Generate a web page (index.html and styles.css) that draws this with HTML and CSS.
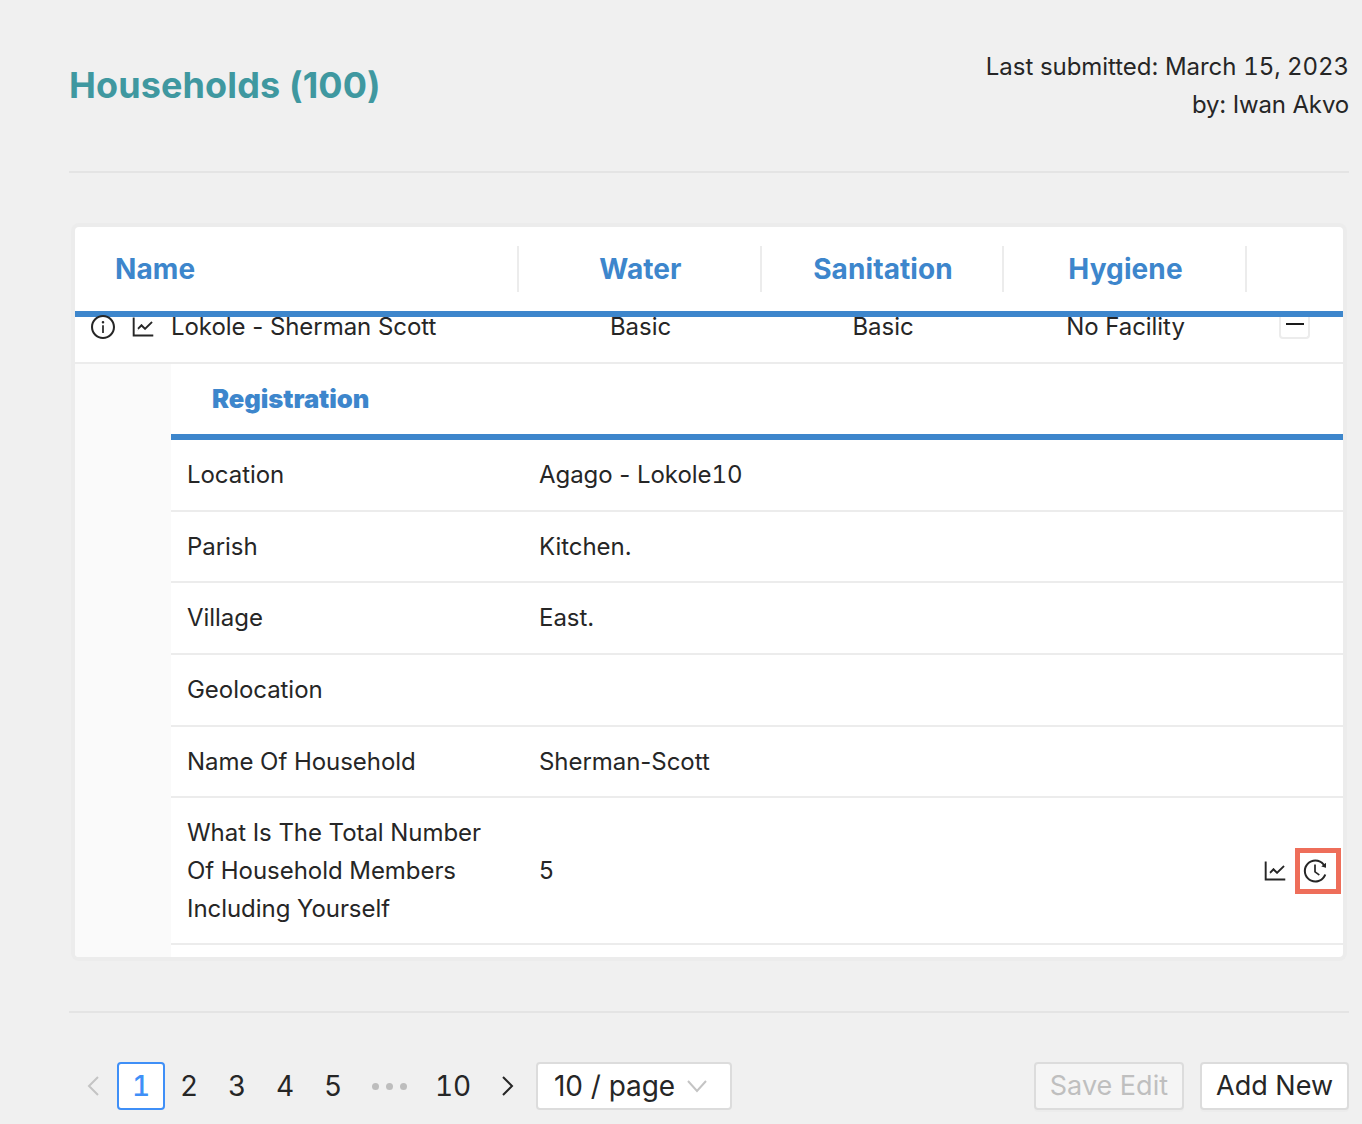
FILE: index.html
```html
<!DOCTYPE html>
<html lang="en">
  <head>
    <meta charset="UTF-8" />
    <title>Households</title>
    <link rel="stylesheet" href="styles.css">
  </head>
  <body>
    <div class="page">
      <header class="page-head">
        <h1>Households (100)</h1>
        <div class="submitted">
          <div>Last submitted: March <span class="num">15, 2023</span></div>
          <div class="submitted-by">by: Iwan Akvo</div>
        </div>
      </header>

      <div class="card">
        <div class="table-head">
          <div class="th th-name">Name</div>
          <div class="th">Water</div>
          <div class="th">Sanitation</div>
          <div class="th">Hygiene</div>
          <div class="th th-end"></div>
        </div>

        <div class="table-row">
          <div class="cell-name">
            <svg class="icon" viewBox="64 64 896 896"><path d="M512 64C264.6 64 64 264.6 64 512s200.6 448 448 448 448-200.6 448-448S759.4 64 512 64zm0 820c-205.4 0-372-166.6-372-372s166.6-372 372-372 372 166.6 372 372-166.6 372-372 372z"/><path d="M464 336a48 48 0 1 0 96 0 48 48 0 1 0-96 0zm72 112h-48c-4.4 0-8 3.6-8 8v272c0 4.4 3.6 8 8 8h48c4.4 0 8-3.6 8-8V456c0-4.4-3.6-8-8-8z"/></svg>
            <svg class="icon icon-chart" viewBox="64 64 896 896"><path d="M888 792H200V168c0-4.4-3.6-8-8-8h-56c-4.4 0-8 3.6-8 8v688c0 4.4 3.6 8 8 8h752c4.4 0 8-3.6 8-8v-56c0-4.4-3.6-8-8-8zM305.8 637.7c3.1 3.1 8.1 3.1 11.3 0l138.3-137.6L583 628.5c3.1 3.1 8.2 3.1 11.3 0l275.4-275.3c3.1-3.1 3.1-8.2 0-11.3l-39.6-39.6a8.03 8.03 0 0 0-11.3 0l-230 229.9L461.4 404a8.03 8.03 0 0 0-11.3 0L306 548.9a8.03 8.03 0 0 0-.2 11.3l39.6 39.5z"/></svg>
            <span class="row-title">Lokole - Sherman Scott</span>
          </div>
          <div class="cell">Basic</div>
          <div class="cell">Basic</div>
          <div class="cell">No Facility</div>
          <div class="cell-toggle"><div class="collapse-btn"><span class="minus"></span></div></div>
        </div>

        <div class="detail">
          <div class="detail-indent"></div>
          <div class="detail-body">
            <div class="tab-head">Registration</div>
            <div class="q-row"><div class="q-label">Location</div><div class="q-value">Agago - Lokole<span class="num">10</span></div></div>
            <div class="q-row"><div class="q-label">Parish</div><div class="q-value">Kitchen.</div></div>
            <div class="q-row"><div class="q-label">Village</div><div class="q-value">East.</div></div>
            <div class="q-row"><div class="q-label">Geolocation</div><div class="q-value"></div></div>
            <div class="q-row"><div class="q-label">Name Of Household</div><div class="q-value">Sherman-Scott</div></div>
            <div class="q-row q-row-last">
              <div class="q-label">What Is The Total Number Of Household Members Including Yourself</div>
              <div class="q-value">5</div>
              <div class="q-actions">
                <svg class="icon icon-chart" viewBox="64 64 896 896"><path d="M888 792H200V168c0-4.4-3.6-8-8-8h-56c-4.4 0-8 3.6-8 8v688c0 4.4 3.6 8 8 8h752c4.4 0 8-3.6 8-8v-56c0-4.4-3.6-8-8-8zM305.8 637.7c3.1 3.1 8.1 3.1 11.3 0l138.3-137.6L583 628.5c3.1 3.1 8.2 3.1 11.3 0l275.4-275.3c3.1-3.1 3.1-8.2 0-11.3l-39.6-39.6a8.03 8.03 0 0 0-11.3 0l-230 229.9L461.4 404a8.03 8.03 0 0 0-11.3 0L306 548.9a8.03 8.03 0 0 0-.2 11.3l39.6 39.5z"/></svg>
                <span class="history">
                  <svg class="icon" viewBox="64 64 896 896"><path d="M536.1 273H488c-4.4 0-8 3.6-8 8v275.3c0 2.6 1.2 5 3.3 6.5l165.3 120.7c3.6 2.6 8.6 1.9 11.2-1.7l28.6-39c2.7-3.7 1.9-8.7-1.7-11.2L544.1 528.5V281c0-4.4-3.6-8-8-8zm219.8 75.2l156.8 38.3c5 1.2 9.9-2.6 9.9-7.7l.8-161.5c0-6.7-7.7-10.5-12.9-6.3L752.9 334.1a8 8 0 0 0 3 14.1zm167.7 301.1l-56.7-19.5a8 8 0 0 0-10.1 4.8c-1.9 5.1-3.9 10.1-6 15.1-17.8 42.1-43.3 80-75.9 112.5a353 353 0 0 1-112.5 75.9 352.18 352.18 0 0 1-137.7 27.8c-47.8 0-94.1-9.3-137.7-27.8a353 353 0 0 1-112.5-75.9c-32.5-32.5-58-70.4-75.9-112.5A353.44 353.44 0 0 1 171 512c0-47.8 9.3-94.2 27.8-137.8 17.8-42.1 43.3-80 75.9-112.5a353 353 0 0 1 112.5-75.9C430.6 167.3 477 158 524.8 158s94.1 9.3 137.7 27.8A353 353 0 0 1 775 261.7c10.2 10.3 19.8 21 28.6 32.3l59.8-46.8C784.7 146.6 662.2 81.9 524.6 82 285 82.1 92.6 276.7 95 516.4 97.4 751.9 288.9 942 524.8 942c185.5 0 343.5-117.6 403.7-282.3 1.5-4.2-.7-8.9-4.9-10.4z"/></svg>
                </span>
              </div>
            </div>
          </div>
        </div>
      </div>

      <footer class="page-foot">
        <div class="pager">
          <span class="pg-arrow pg-disabled"><svg viewBox="0 0 14 24"><path d="M12 3 3 12l9 9"/></svg></span>
          <span class="pg-item pg-active">1</span>
          <span class="pg-item">2</span>
          <span class="pg-item">3</span>
          <span class="pg-item">4</span>
          <span class="pg-item">5</span>
          <span class="pg-item pg-dots"><i></i><i></i><i></i></span>
          <span class="pg-item pg-last">10</span>
          <span class="pg-arrow pg-next"><svg viewBox="0 0 14 24"><path d="m2 3 9 9-9 9"/></svg></span>
          <span class="pg-select">10 / page<svg viewBox="0 0 22 14"><path d="m2 2 9 10 9-10"/></svg></span>
        </div>
        <div class="foot-actions">
          <button class="btn" disabled>Save Edit</button>
          <button class="btn">Add New</button>
        </div>
      </footer>
    </div>
  </body>
</html>
```

FILE: styles.css
```css
* {
  box-sizing: border-box;
}
body {
  margin: 0;
  background: #f0f0f0;
  font-family: Inter, 'Liberation Sans', sans-serif;
  font-size: 24px;
  line-height: 38px;
  color: #262626;
  letter-spacing: -0.05px;
}
.num {
  font-variant-numeric: tabular-nums;
}
.page {
  padding: 48px 13px 0 69px;
  min-height: 1124px;
}
.page-head {
  display: flex;
  justify-content: space-between;
  height: 125px;
  border-bottom: 2px solid #e4e4e4;
}
h1 {
  margin: 0;
  font-size: 36px;
  line-height: 74px;
  font-weight: 700;
  letter-spacing: 0.12px;
  color: #3f98a0;
}
.submitted {
  text-align: right;
}
.submitted-by {
  letter-spacing: -0.15px;
}

.card {
  margin: 54px 6px 0;
  height: 730px;
  background: #fff;
  border-radius: 4px;
  box-shadow: 0 0 0 4px #ececec;
  overflow: hidden;
}
.table-head,
.table-row {
  display: grid;
  grid-template-columns: 444px 243px 242px 243px 96px;
}
.table-head {
  height: 90px;
  align-items: center;
  border-bottom: 6px solid #3d86cc;
}
.th {
  height: 46px;
  padding-left: 2px;
  line-height: 46px;
  font-size: 28px;
  font-weight: 700;
  letter-spacing: 0.1px;
  color: #3d86cc;
  text-align: center;
  border-right: 2px solid #ececec;
}
.th-name {
  text-align: left;
  padding-left: 40px;
}
.th-end {
  border-right: none;
}
.table-row {
  height: 47px;
  border-bottom: 2px solid #ececec;
}
.cell-name {
  display: flex;
  align-items: center;
  height: 20px;
  padding-left: 16px;
}
.cell {
  text-align: center;
  height: 20px;
  line-height: 20px;
}
.row-title {
  line-height: 20px;
  margin-left: 16px;
}
.icon {
  width: 24px;
  height: 24px;
  fill: #262626;
  flex: none;
}
.icon-chart {
  margin-left: 16px;
}
.cell-toggle {
  padding-left: 32px;
}
.collapse-btn {
  width: 31px;
  height: 22px;
  padding-top: 6px;
  background: #fff;
  border: 2px solid #ececec;
  border-top: none;
  border-radius: 0 0 4px 4px;
}
.minus {
  display: block;
  width: 18px;
  height: 2px;
  margin: 0 auto;
  background: #1a1a1a;
}

.detail {
  display: flex;
  height: 593px;
}
.detail-indent {
  width: 96px;
  background: #fafafa;
}
.detail-body {
  flex: 1;
}
.tab-head {
  height: 76px;
  padding: 16px 0 0 41px;
  font-size: 25.6px;
  font-weight: 900;
  color: #3d86cc;
  border-bottom: 6px solid #3d86cc;
}
.q-row {
  display: flex;
  align-items: center;
  min-height: 71.7px;
  border-bottom: 2px solid #ececec;
}
.q-label {
  width: 352px;
  padding: 0 16px;
}
.q-value {
  padding-left: 16px;
}
.q-row-last {
  min-height: 147px;
}
.q-actions {
  margin-left: auto;
  display: flex;
  align-items: center;
  padding-right: 2px;
}
.q-actions .icon-chart {
  margin: 0;
}
.history {
  display: flex;
  align-items: center;
  justify-content: center;
  width: 46px;
  height: 46px;
  margin-left: 8px;
  padding-right: 6px;
  border: 5px solid #ee6e5a;
}

.page-foot {
  display: flex;
  justify-content: space-between;
  align-items: center;
  margin-top: 54px;
  padding: 49px 0 14px 0;
  border-top: 2px solid #e4e4e4;
}
.pager {
  display: flex;
  align-items: center;
  font-size: 28px;
}
.pg-item,
.pg-arrow {
  display: flex;
  align-items: center;
  justify-content: center;
  width: 48px;
  height: 48px;
  font-variant-numeric: tabular-nums;
}
.pg-arrow svg {
  width: 14px;
  height: 24px;
  fill: none;
  stroke: #262626;
  stroke-width: 2;
}
.pg-disabled svg {
  stroke: #c4c4c4;
}
.pg-active {
  font-weight: 500;
  color: #3f8ff7;
  background: #fff;
  border: 2px solid #3f8ff7;
  border-radius: 4px;
}
.pg-dots {
  gap: 7px;
  width: 64px;
}
.pg-dots i {
  width: 7px;
  height: 7px;
  border-radius: 50%;
  background: #bdbdbd;
}
.pg-last {
  width: 64px;
}
.pg-next {
  width: 46px;
  margin-right: 5px;
}
.pg-select {
  display: flex;
  align-items: center;
  justify-content: space-between;
  width: 196px;
  height: 48px;
  padding: 0 22px 0 16px;
  background: #fff;
  border: 2px solid #dcdcdc;
  border-radius: 4px;
}
.pg-select svg {
  width: 22px;
  height: 14px;
  fill: none;
  stroke: #c4c4c4;
  stroke-width: 2;
}
.foot-actions {
  display: flex;
  gap: 16px;
}
.btn {
  height: 48px;
  padding: 0 14px;
  font: inherit;
  font-size: 27px;
  line-height: 44px;
  color: #262626;
  background: #fff;
  border: 2px solid #dcdcdc;
  border-radius: 4px;
  box-shadow: 0 2px 0 rgba(0,0,0,0.015);
}
.btn[disabled] {
  color: #bfbfbf;
  background: #f5f5f5;
}
```
